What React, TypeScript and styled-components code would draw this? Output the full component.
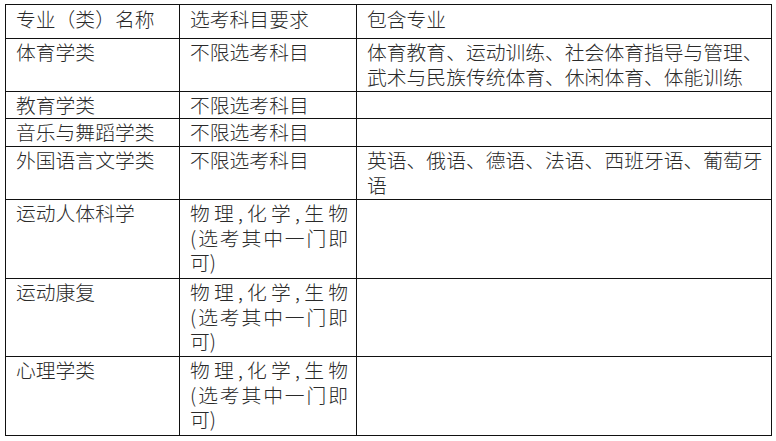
import React from "react";
import styled, { createGlobalStyle } from "styled-components";

const GlobalStyle = createGlobalStyle`
  html, body {
    margin: 0;
    padding: 0;
    background: #ffffff;
  }
  body {
    font-family: "Noto Sans CJK SC", "Noto Sans", sans-serif;
    color: #2a2a2a;
  }
`;

const Page = styled.div`
  padding: 4px 0 0 5px;
`;

const Table = styled.table`
  border-collapse: collapse;
  table-layout: fixed;
  width: 766px;
  font-size: 19.8px;
  font-weight: 300;
  line-height: 24.5px;
`;

const Col = styled.col<{ $w: number }>`
  width: ${(p) => p.$w}px;
`;

const Row = styled.tr<{ $h: number }>`
  height: ${(p) => p.$h}px;
`;

const Cell = styled.td<{ $padR?: number }>`
  border: 1.5px solid #111;
  vertical-align: top;
  padding: 1px ${(p) => p.$padR ?? 10}px 0 10px;
  text-align: left;
  word-break: break-all;
`;

const HeadCell = styled(Cell).attrs({ as: "th" })`
  font-weight: 300;
  padding-top: 2px;
`;

const JustLine = styled.div`
  text-align: justify;
  text-align-last: justify;
`;

const JustPara = styled.div`
  text-align: justify;
`;

type RowData = {
  name: string;
  req: "none" | "sci";
  majors: string;
  h: number;
};

const rows: RowData[] = [
  {
    name: "体育学类",
    req: "none",
    majors:
      "体育教育、运动训练、社会体育指导与管理、武术与民族传统体育、休闲体育、体能训练",
    h: 53,
  },
  { name: "教育学类", req: "none", majors: "", h: 27 },
  { name: "音乐与舞蹈学类", req: "none", majors: "", h: 28 },
  {
    name: "外国语言文学类",
    req: "none",
    majors: "英语、俄语、德语、法语、西班牙语、葡萄牙语",
    h: 53,
  },
  { name: "运动人体科学", req: "sci", majors: "", h: 79 },
  { name: "运动康复", req: "sci", majors: "", h: 78 },
  { name: "心理学类", req: "sci", majors: "", h: 79 },
];

const Requirement: React.FC<{ kind: RowData["req"] }> = ({ kind }) =>
  kind === "none" ? (
    <>不限选考科目</>
  ) : (
    <>
      <JustLine>物理,化学,生物</JustLine>
      <JustPara>(选考其中一门即可)</JustPara>
    </>
  );

export default function App() {
  return (
    <>
      <GlobalStyle />
      <Page>
        <Table>
          <colgroup>
            <Col $w={174} />
            <Col $w={177} />
            <Col $w={415} />
          </colgroup>
          <thead>
            <Row $h={34}>
              <HeadCell>专业（类）名称</HeadCell>
              <HeadCell>选考科目要求</HeadCell>
              <HeadCell $padR={3}>包含专业</HeadCell>
            </Row>
          </thead>
          <tbody>
            {rows.map((r) => (
              <Row key={r.name} $h={r.h}>
                <Cell>{r.name}</Cell>
                <Cell $padR={8}>
                  <Requirement kind={r.req} />
                </Cell>
                <Cell $padR={3}>{r.majors}</Cell>
              </Row>
            ))}
          </tbody>
        </Table>
      </Page>
    </>
  );
}
